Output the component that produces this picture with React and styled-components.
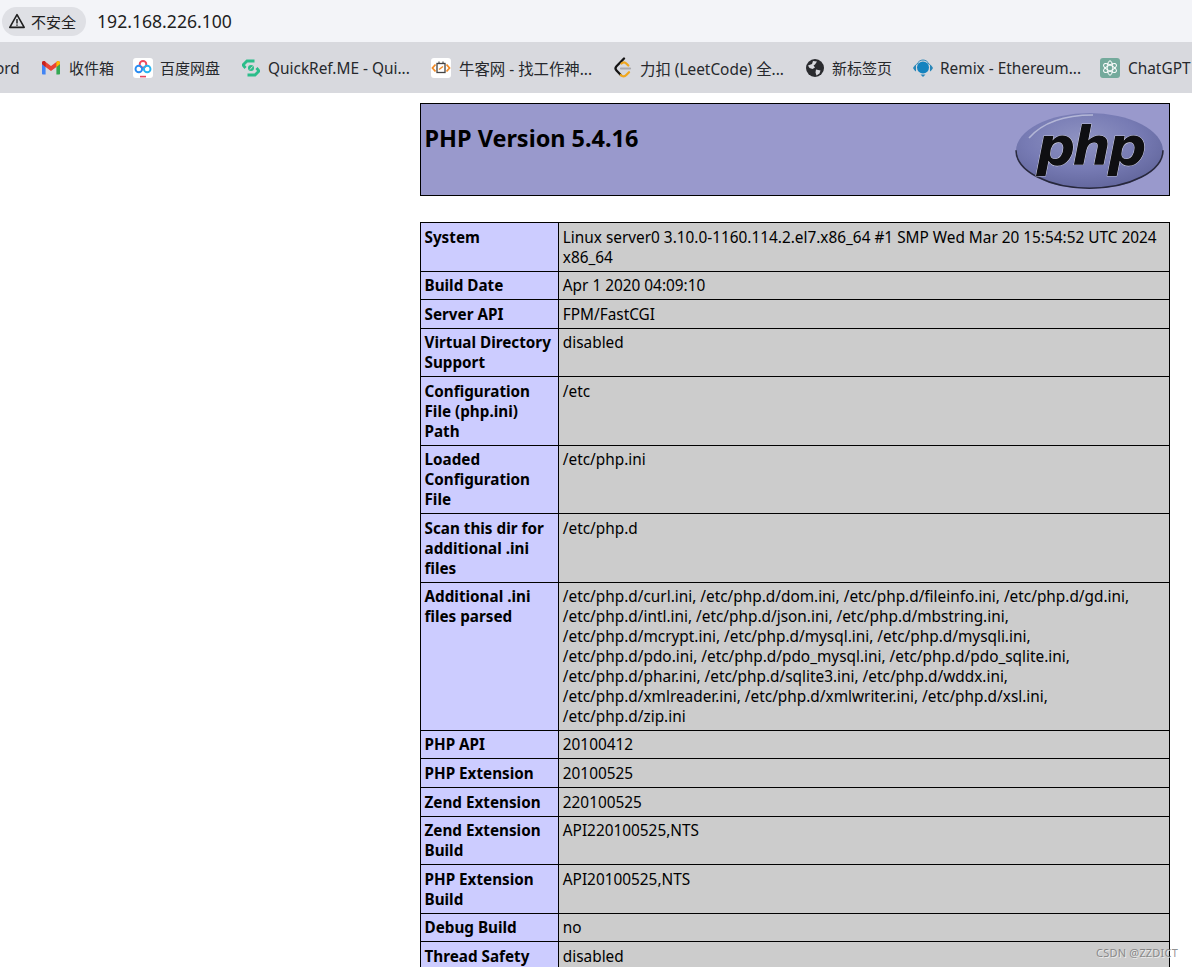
import React from 'react';
import styled, { createGlobalStyle } from 'styled-components';

const GlobalStyle = createGlobalStyle`
  html, body {
    margin: 0;
    padding: 0;
    height: 967px;
    overflow: hidden;
    background: #fff;
  }
  body {
    font-family: "Noto Sans", "Noto Sans CJK SC", sans-serif;
    color: #000;
  }
`;

const Shell = styled.div`
  position: relative;
  height: 967px;
  overflow: hidden;
`;

const AddressBar = styled.div`
  height: 42px;
  box-sizing: border-box;
  background: #f3f4f8;
  display: flex;
  align-items: center;
  padding-left: 2px;
  gap: 11px;
`;

const SecurityChip = styled.div`
  height: 29px;
  width: 84px;
  box-sizing: border-box;
  border-radius: 15px;
  background: #dfe0e5;
  display: flex;
  align-items: center;
  padding-left: 6px;
  gap: 5px;
  font-size: 15px;
  color: #1f1f1f;
`;

const Url = styled.span`
  font-size: 17.6px;
  color: #1f1f1f;
`;

const BookmarkBar = styled.div`
  height: 51px;
  box-sizing: border-box;
  background: #d8d9de;
  display: flex;
  align-items: center;
  white-space: nowrap;
  overflow: hidden;
  font-size: 15.4px;
  color: #26282c;
`;

const Bookmark = styled.div`
  flex: none;
  display: flex;
  align-items: center;
  gap: ${({ $gap }) => $gap ?? 8}px;
  width: ${({ $w }) => $w}px;
  margin-left: ${({ $shift }) => $shift ?? 0}px;
`;

const Label = styled.span`
  flex: none;
  padding-top: ${({ $size }) => ($size ? 0 : 1)}px;
  font-size: ${({ $size }) => ($size ? `${$size}px` : 'inherit')};
`;

const Content = styled.main`
  width: 750px;
  margin: 10px 0 0 420px;
`;

const Banner = styled.header`
  height: 93px;
  box-sizing: border-box;
  border: 1px solid #000;
  background: #9999cc;
  display: flex;
  justify-content: space-between;
  padding: 0 5px 0 3.5px;
`;

const Title = styled.h1`
  margin: 17px 0 0;
  font-size: 23.45px;
  line-height: 35px;
  font-weight: 700;
`;

const Logo = styled.svg`
  margin-top: 8px;
  width: 149px;
  height: 78px;
`;

const InfoTable = styled.table`
  width: 750px;
  margin-top: 26px;
  border-collapse: collapse;
  table-layout: fixed;
  font-size: 15.36px;
  line-height: 19.9px;
`;

const KeyCell = styled.td`
  width: 130px;
  border: 1px solid #000;
  background: #ccccff;
  font-weight: 700;
  font-size: 15.25px;
  vertical-align: baseline;
  padding: 4.6px 3px 3.15px 3.5px;
`;

const ValueCell = styled.td`
  border: 1px solid #000;
  background: #cccccc;
  vertical-align: baseline;
  padding: 4.6px 3px 3.15px 4.3px;
`;

const Watermark = styled.div`
  position: absolute;
  right: 14px;
  bottom: 7px;
  font-size: 11px;
  line-height: 14px;
  letter-spacing: 0.2px;
  color: rgba(110, 110, 110, 0.75);
  text-shadow: 1px 1px 0 rgba(255, 255, 255, 0.6);
`;

const Warning = () => (
  <svg width="18" height="18" viewBox="0 0 18 18" fill="none">
    <path d="M9 2.6 16.2 15.4H1.8Z" stroke="#1f1f1f" strokeWidth="1.6" strokeLinejoin="round" />
    <path d="M9 7v4.4M9 12.4v1.4" stroke="#1f1f1f" strokeWidth="1.5" />
  </svg>
);

const Gmail = () => (
  <svg width="20" height="20" viewBox="0 0 20 20">
    <path d="M1 5.5v10c0 .6.5 1 1 1h2.6V8.5Z" fill="#4285f4" />
    <path d="M19 5.5v10c0 .6-.5 1-1 1h-2.6V8.5Z" fill="#34a853" />
    <path d="M4.6 9 1 6V5c0-1.6 1.8-2.4 3-1.5l6 4.6 6-4.6C17.200 2.600 19 3.400 19 5v1l-3.600 3L10 13Z" fill="#ea4335" />
    <path d="M15.400 9 19 6V5c0-1.600-1.800-2.400-3-1.500l-.6.500Z" fill="#fbbc04" />
    <path d="M1 6 4.600 9V4c-.2-.2-.4-.4-.6-.5C2.800 2.600 1 3.400 1 5Z" fill="#c5221f" />
  </svg>
);

const BaiduPan = () => (
  <svg width="20" height="20" viewBox="0 0 20 20">
    <rect width="20" height="20" rx="3" fill="#fff" />
    <circle cx="10" cy="6.300" r="3.300" fill="none" stroke="#ef4a5c" strokeWidth="1.900" />
    <circle cx="5.800" cy="11" r="3.300" fill="none" stroke="#2a8cf2" strokeWidth="1.900" />
    <circle cx="14.200" cy="11" r="3.300" fill="none" stroke="#27b4f0" strokeWidth="1.900" />
    <rect x="7" y="17.800" width="6" height="1.600" fill="#e5455c" />
  </svg>
);

const QuickRef = () => (
  <svg width="18" height="18" viewBox="0 0 18 18" fill="none">
    <path d="M3.500 9 1 6 5 2h7.500" stroke="#2bbd8a" strokeWidth="2.800" />
    <path d="M14.500 9 17 12l-4 4H5.500" stroke="#2bbd8a" strokeWidth="2.800" />
    <circle cx="9" cy="9" r="3" fill="#2bbd8a" />
    <path d="M8 10.500 10.500 7.500" stroke="#d8d9de" strokeWidth="1" />
  </svg>
);

const Nowcoder = () => (
  <svg width="20" height="20" viewBox="0 0 20 20" fill="none">
    <rect width="20" height="20" rx="3" fill="#fff" />
    <path d="M4.500 6.500 1.500 10l3 3.500M15.500 6.500l3 3.500-3 3.500" stroke="#f28c28" strokeWidth="1.800" />
    <rect x="6" y="5.500" width="8" height="9" stroke="#444" strokeWidth="1.300" />
    <path d="M8 11.500 12 8.500" stroke="#f28c28" strokeWidth="1.500" />
    <path d="M8 3.500v2M12 3.500v2" stroke="#444" strokeWidth="1.100" />
  </svg>
);

const LeetCode = () => (
  <svg width="18" height="22" viewBox="0 0 18 22" fill="none">
    <path d="M10 1.500 2.500 9.200c-1.300 1.400-1.300 2.900 0 4.300l4.300 4.500" stroke="#141414" strokeWidth="2.300" strokeLinecap="round" />
    <path d="M6.800 18c1.600 1.700 3.900 1.700 5.500 0l2.700-2.700M7.500 6.500c1.600-1.400 3.500-1.400 4.800 0l2 2" stroke="#f0a71f" strokeWidth="2.300" strokeLinecap="round" />
    <path d="M7 11.500h9" stroke="#a9a9ad" strokeWidth="2.200" strokeLinecap="round" />
  </svg>
);

const Globe = () => (
  <svg width="18" height="18" viewBox="0 0 18 18">
    <circle cx="9" cy="9" r="9" fill="#2a2b2f" />
    <path d="M2 6.500 6 5l1-3 4 .5L9 5.500l-1.500 1 1.500 2-2.500 1.500L3.500 9ZM10 10.500l4.500 1-1 3-3 2-1-3Z" fill="#d8d9de" />
  </svg>
);

const Remix = () => (
  <svg width="20" height="20" viewBox="0 0 20 20">
    <path d="M3 6.500C1.500 7.500.5 9 0 10c.5 1 1.500 2.500 3 3.500ZM17 6.500c1.500 1 2.500 2.500 3 3.500-.5 1-1.500 2.500-3 3.500Z" fill="#2a86b8" />
    <circle cx="10" cy="9.500" r="6" fill="#1583bf" />
    <path d="M3.500 7C5 3.500 7.500 2 10 2s5 1.500 6.500 5" fill="none" stroke="#2a86b8" strokeWidth="1" />
    <path d="M7.500 16.500h5L10 19Z" fill="#2a86b8" />
  </svg>
);

const ChatGpt = () => (
  <svg width="20" height="20" viewBox="0 0 20 20" fill="none">
    <rect width="20" height="20" rx="3" fill="#74aa9c" />
    <g stroke="#fff" strokeWidth="1">
      <ellipse cx="10" cy="10" rx="2.800" ry="7.200" />
      <ellipse cx="10" cy="10" rx="2.800" ry="7.200" transform="rotate(60 10 10)" />
      <ellipse cx="10" cy="10" rx="2.800" ry="7.200" transform="rotate(120 10 10)" />
    </g>
  </svg>
);

const PhpLogo = () => (
  <Logo viewBox="0 0 149 78">
    <defs>
      <radialGradient id="phpOval" cx="0.45" cy="0.35" r="0.7">
        <stop offset="0" stopColor="#8f93c2" />
        <stop offset="0.55" stopColor="#777bb4" />
        <stop offset="1" stopColor="#5f6399" />
      </radialGradient>
    </defs>
    <ellipse cx="74.500" cy="39" rx="73.500" ry="38" fill="url(#phpOval)" />
    <path d="M148 39c0 21-33 38-73.500 38S1 60 1 39" fill="none" stroke="#1c1c2a" strokeWidth="1.600" transform="translate(0 -.8)" opacity="0.85" />
    <path d="M14 26C28 10 52 3 78 3" fill="none" stroke="#c2c4de" strokeWidth="1.500" opacity="0.8" />
    <text x="75" y="53" textAnchor="middle" fontFamily="'DejaVu Sans', sans-serif" fontWeight="700" fontStyle="italic" fontSize="54" letterSpacing="-3" fill="#0f0f12" stroke="#e9e9f4" strokeWidth="0.700" paintOrder="stroke">php</text>
  </Logo>
);

const bookmarks = [
  { label: 'ord', w: 41, shift: -5 },
  { icon: <Gmail />, label: '收件箱', w: 92, shift: 5, size: 15 },
  { icon: <BaiduPan />, label: '百度网盘', w: 109, gap: 7, size: 15 },
  { icon: <QuickRef />, label: 'QuickRef.ME - Qui...', w: 189 },
  { icon: <Nowcoder />, label: '牛客网 - 找工作神...', w: 183 },
  { icon: <LeetCode />, label: '力扣 (LeetCode) 全...', w: 192, gap: 8 },
  { icon: <Globe />, label: '新标签页', w: 107, size: 15 },
  { icon: <Remix />, label: 'Remix - Ethereum...', w: 187, gap: 7 },
  { icon: <ChatGpt />, label: 'ChatGPT', w: 92 },
];

const rows = [
  ['System', 'Linux server0 3.10.0-1160.114.2.el7.x86_64 #1 SMP Wed Mar 20 15:54:52 UTC 2024 x86_64'],
  ['Build Date', 'Apr 1 2020 04:09:10'],
  ['Server API', 'FPM/FastCGI'],
  ['Virtual Directory Support', 'disabled'],
  ['Configuration File (php.ini) Path', '/etc'],
  ['Loaded Configuration File', '/etc/php.ini'],
  ['Scan this dir for additional .ini files', '/etc/php.d'],
  ['Additional .ini files parsed', '/etc/php.d/curl.ini, /etc/php.d/dom.ini, /etc/php.d/fileinfo.ini, /etc/php.d/gd.ini, /etc/php.d/intl.ini, /etc/php.d/json.ini, /etc/php.d/mbstring.ini, /etc/php.d/mcrypt.ini, /etc/php.d/mysql.ini, /etc/php.d/mysqli.ini, /etc/php.d/pdo.ini, /etc/php.d/pdo_mysql.ini, /etc/php.d/pdo_sqlite.ini, /etc/php.d/phar.ini, /etc/php.d/sqlite3.ini, /etc/php.d/wddx.ini, /etc/php.d/xmlreader.ini, /etc/php.d/xmlwriter.ini, /etc/php.d/xsl.ini, /etc/php.d/zip.ini'],
  ['PHP API', '20100412'],
  ['PHP Extension', '20100525'],
  ['Zend Extension', '220100525'],
  ['Zend Extension Build', 'API220100525,NTS'],
  ['PHP Extension Build', 'API20100525,NTS'],
  ['Debug Build', 'no'],
  ['Thread Safety', 'disabled'],
];

export default function App() {
  return (
    <Shell>
      <GlobalStyle />
      <AddressBar>
        <SecurityChip>
          <Warning />
          不安全
        </SecurityChip>
        <Url>192.168.226.100</Url>
      </AddressBar>
      <BookmarkBar>
        {bookmarks.map(({ icon, label, w, gap, shift, size }) => (
          <Bookmark key={label} $w={w} $gap={gap} $shift={shift}>
            {icon}
            <Label $size={size}>{label}</Label>
          </Bookmark>
        ))}
      </BookmarkBar>
      <Content>
        <Banner>
          <Title>PHP Version 5.4.16</Title>
          <PhpLogo />
        </Banner>
        <InfoTable>
          <tbody>
            {rows.map(([key, value]) => (
              <tr key={key}>
                <KeyCell>{key}</KeyCell>
                <ValueCell>{value}</ValueCell>
              </tr>
            ))}
          </tbody>
        </InfoTable>
      </Content>
      <Watermark>CSDN @ZZDICT</Watermark>
    </Shell>
  );
}
